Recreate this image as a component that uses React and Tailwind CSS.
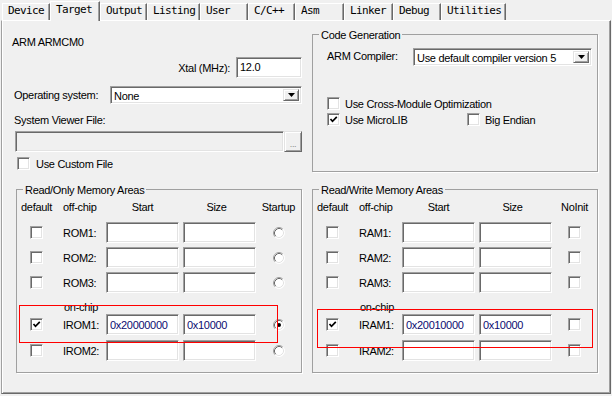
import React from "react";

const tabs = [
  ["Device", 48],
  ["Target", 50],
  ["Output", 47],
  ["Listing", 53],
  ["User", 48],
  ["C/C++", 47],
  ["Asm", 49],
  ["Linker", 49],
  ["Debug", 48],
  ["Utilities", 65],
];

const sunken =
  "border border-t-[#a0a0a0] border-l-[#a0a0a0] border-b-white border-r-white shadow-[inset_1px_1px_0_#696969,inset_-1px_-1px_0_#e3e3e3]";
const raised =
  "border border-t-[#e3e3e3] border-l-[#e3e3e3] border-b-[#696969] border-r-[#696969] shadow-[inset_1px_1px_0_#fff,inset_-1px_-1px_0_#a0a0a0] bg-[#f0f0f0]";

function Check({ checked }) {
  return (
    <div className={`w-[13px] h-[13px] bg-white ${sunken} flex items-center justify-center shrink-0`}>
      {checked && (
        <svg width="9" height="9" viewBox="0 0 9 9">
          <path d="M1.5 4 L3.5 6.3 L7.8 1.8" stroke="#000" strokeWidth="1.7" fill="none" />
        </svg>
      )}
    </div>
  );
}

function Radio({ checked }) {
  return (
    <svg width="12" height="12" viewBox="0 0 12 12">
      <circle cx="6" cy="6" r="5.5" fill="#fff" />
      <path d="M2.11 9.89 A5.5 5.5 0 0 1 9.89 2.11" stroke="#a0a0a0" fill="none" />
      <path d="M2.82 9.18 A4.5 4.5 0 0 1 9.18 2.82" stroke="#696969" fill="none" />
      <path d="M9.89 2.11 A5.5 5.5 0 0 1 2.11 9.89" stroke="#fff" fill="none" />
      <path d="M9.18 2.82 A4.5 4.5 0 0 1 2.82 9.18" stroke="#e3e3e3" fill="none" />
      {checked && <circle cx="6" cy="6" r="2" fill="#000" />}
    </svg>
  );
}

function DropButton() {
  return (
    <div className={`w-[16px] h-full ${raised} flex items-center justify-center`}>
      <svg width="7" height="4" viewBox="0 0 7 4">
        <path d="M0 0 H7 L3.5 4 Z" fill="#000" />
      </svg>
    </div>
  );
}

function Select({ value, className }) {
  return (
    <div className={`h-[18px] bg-white ${sunken} flex items-stretch p-[2px] ${className}`}>
      <div className="flex-1 leading-[14px] pl-[1px]">{value}</div>
      <DropButton />
    </div>
  );
}

function Group({ title, className, children }) {
  return (
    <div className={`relative border border-[#a0a0a0] shadow-[1px_1px_0_#fff] ${className}`}>
      <div className="absolute -top-[7px] left-[6px] px-[2px] bg-[#f0f0f0] leading-[14px]">{title}</div>
      {children}
    </div>
  );
}

function Field({ value }) {
  return (
    <div className={`w-[73px] h-[21px] bg-white ${sunken} pl-[3px] pt-[3px] leading-[14px] text-[#0b0b70]`}>
      {value}
    </div>
  );
}

function MemRow({ checked, label, start, size, last, className = "" }) {
  return (
    <div className={`flex items-center h-[21px] ${className}`}>
      <div className="w-[39px] flex justify-center">
        <Check checked={checked} />
      </div>
      <div className="w-[50px] pl-[7px]">{label}</div>
      <Field value={start} />
      <div className="w-[4px]" />
      <Field value={size} />
      <div className="flex-1 flex justify-center">{last}</div>
    </div>
  );
}

function MemGroup({ title, prefix, lastHead, lastFor, onStart, onSize, className }) {
  return (
    <Group title={title} className={`w-[286px] h-[184px] ${className}`}>
      <div className="pt-[10px]">
        <div className="flex items-center h-[14px]">
          <div className="w-[39px] text-center">default</div>
          <div className="w-[50px] pl-[7px]">off-chip</div>
          <div className="w-[73px] text-center">Start</div>
          <div className="w-[4px]" />
          <div className="w-[73px] text-center pr-[6px]">Size</div>
          <div className="flex-1 text-center">{lastHead}</div>
        </div>
        <MemRow className="mt-[8px]" label={`${prefix}1:`} last={lastFor(false)} />
        <MemRow className="mt-[4px]" label={`${prefix}2:`} last={lastFor(false)} />
        <MemRow className="mt-[4px]" label={`${prefix}3:`} last={lastFor(false)} />
        <div className="mt-[7px] h-[14px] pl-[47px]">on-chip</div>
        <MemRow checked label={`I${prefix}1:`} start={onStart} size={onSize} last={lastFor(true)} />
        <MemRow className="mt-[5px]" label={`I${prefix}2:`} last={lastFor(false)} />
      </div>
    </Group>
  );
}

export default function App() {
  return (
    <div className="w-[612px] h-[396px] bg-[#f0f0f0] relative overflow-hidden font-['Liberation_Sans',Arial,sans-serif] text-[11px] tracking-[-0.3px] leading-[14px] text-black">
      {/* tab strip */}
      <div className="relative z-10 flex items-end h-[20px] pl-[2px] font-['DejaVu_Sans_Mono',monospace] tracking-[-0.6px]">
        {tabs.map(([name, w]) =>
          name === "Target" ? (
            <div
              key={name}
              style={{ width: w }}
              className="h-[20px] -mb-[1px] bg-[#f0f0f0] border-l border-t border-r border-l-white border-t-white border-r-[#696969] shadow-[inset_-1px_0_0_#a0a0a0] pl-[5px] pt-[1px] leading-[14px]"
            >
              {name}
            </div>
          ) : (
            <div
              key={name}
              style={{ width: w }}
              className="h-[17px] border-l border-t border-r border-l-white border-t-white border-r-[#696969] shadow-[inset_-1px_0_0_#a0a0a0] pl-[5px] leading-[14px]"
            >
              {name}
            </div>
          )
        )}
      </div>

      {/* tab body */}
      <div className="ml-[1px] w-[610px] h-[374px] border border-l-[#a0a0a0] border-t-white border-r-[#696969] border-b-[#696969] shadow-[inset_1px_0_0_#fff,inset_-1px_-1px_0_#a0a0a0]">
        <div className="flex h-[168px]">
          {/* left column */}
          <div className="ml-[10px] w-[290px] pt-[14px] flex flex-col">
            <div className="h-[14px]">ARM ARMCM0</div>
            <div className="mt-[8px] flex items-center justify-end h-[21px]">
              <span className="mr-[6px]">Xtal (MHz):</span>
              <div className={`w-[66px] h-[21px] bg-white ${sunken} pl-[3px] pt-[2px]`}>12.0</div>
            </div>
            <div className="mt-[8px] flex items-center h-[18px]">
              <div className="w-[98px] pl-[2px]">Operating system:</div>
              <Select value="None" className="w-[192px]" />
            </div>
            <div className="mt-[9px] h-[14px] pl-[2px]">System Viewer File:</div>
            <div className="mt-[4px] flex h-[21px] pl-[3px]">
              <div className={`w-[269px] h-[21px] bg-[#f0f0f0] ${sunken}`} />
              <div className={`w-[18px] h-[21px] ${raised} flex items-end justify-center pb-[2px] text-[#8a8a8a] text-[9px] leading-[9px]`}>
                ...
              </div>
            </div>
            <div className="mt-[5px] flex items-center h-[13px] pl-[5px]">
              <Check />
              <span className="ml-[6px]">Use Custom File</span>
            </div>
          </div>

          {/* code generation */}
          <Group title="Code Generation" className="ml-[10px] mt-[13px] w-[286px] h-[138px]">
            <div className="mt-[13px] flex items-center h-[18px] pl-[14px]">
              <div className="w-[86px] -mt-[2px]">ARM Compiler:</div>
              <Select value="Use default compiler version 5" className="w-[179px]" />
            </div>
            <div className="mt-[31px] flex items-center h-[13px] pl-[14px]">
              <Check />
              <span className="ml-[5px]">Use Cross-Module Optimization</span>
            </div>
            <div className="mt-[3px] flex items-center h-[13px] pl-[14px]">
              <div className="w-[140px] flex items-center">
                <Check checked />
                <span className="ml-[5px]">Use MicroLIB</span>
              </div>
              <Check />
              <span className="ml-[5px]">Big Endian</span>
            </div>
          </Group>
        </div>

        <div className="flex">
          <MemGroup
            title="Read/Only Memory Areas"
            prefix="ROM"
            lastHead="Startup"
            lastFor={(c) => <Radio checked={c} />}
            onStart="0x20000000"
            onSize="0x10000"
            className="ml-[14px]"
          />
          <MemGroup
            title="Read/Write Memory Areas"
            prefix="RAM"
            lastHead="NoInit"
            lastFor={() => <Check />}
            onStart="0x20010000"
            onSize="0x10000"
            className="ml-[10px]"
          />
        </div>
      </div>

      {/* annotation boxes */}
      <div className="absolute left-[19px] top-[305px] w-[259px] h-[38px] border border-[#ff0000]" />
      <div className="absolute left-[317px] top-[309px] w-[276px] h-[39px] border border-[#ff0000]" />
    </div>
  );
}
